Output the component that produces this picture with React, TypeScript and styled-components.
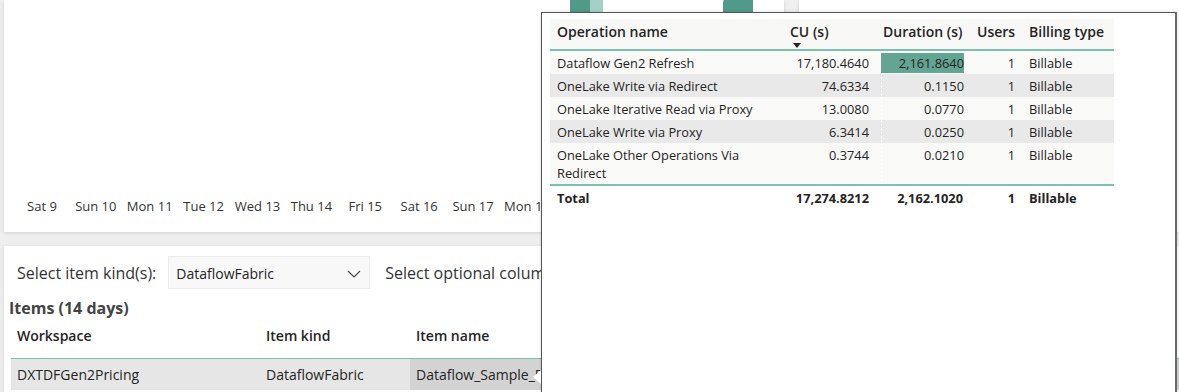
import React from "react";
import styled, { createGlobalStyle } from "styled-components";

const FONT = `"Segoe UI", "Open Sans", "Noto Sans", sans-serif`;

const Global = createGlobalStyle`
  html, body { margin: 0; padding: 0; }
  body {
    background: #efefef;
    font-family: ${FONT};
    color: #252423;
    width: 1179px;
    height: 392px;
    overflow: hidden;
  }
`;

const Page = styled.div`
  position: relative;
  width: 1179px;
  height: 392px;
  overflow: hidden;
  box-sizing: border-box;
  padding-left: 4px;
  display: flex;
  flex-direction: column;
  gap: 14px;
`;

const TopRow = styled.div`
  display: flex;
  gap: 15px;
  height: 232px;
  flex: none;
`;

const ChartCard = styled.div`
  width: 780px;
  flex: none;
  background: #fff;
  box-shadow: 0 1px 4px rgba(0, 0, 0, 0.13);
  display: flex;
  flex-direction: column;
`;

const SideCard = styled.div`
  flex: 1;
  background: #fff;
  box-shadow: 0 1px 4px rgba(0, 0, 0, 0.13);
`;

const Plot = styled.svg`
  display: block;
  flex: 1;
  width: 780px;
`;

const Axis = styled.div`
  display: flex;
  padding: 0 0 17px 11px;
`;

const Tick = styled.span`
  flex: none;
  width: 53.9px;
  text-align: center;
  white-space: nowrap;
  font-size: 13px;
  line-height: 18px;
  color: #333;
`;

const ListCard = styled.div`
  flex: 1;
  background: #fff;
  box-shadow: 0 1px 4px rgba(0, 0, 0, 0.13);
  padding-top: 10px;
  display: flex;
  flex-direction: column;
`;

const FilterRow = styled.div`
  display: flex;
  align-items: center;
  height: 33px;
  padding-left: 13px;
`;

const FilterLabel = styled.span`
  font-size: 16px;
  color: #333;
  white-space: nowrap;
`;

const Dropdown = styled.div`
  margin-left: 12px;
  width: 202px;
  height: 33px;
  box-sizing: border-box;
  background: #f8f8f8;
  border: 1px solid #ececec;
  display: flex;
  align-items: center;
  justify-content: space-between;
  padding: 2px 8px 0 7px;
  font-size: 14px;
  color: #252423;
`;

const SecondLabel = styled(FilterLabel)`
  margin-left: 15px;
`;

const Title = styled.div`
  margin-top: 8px;
  padding-left: 5px;
  font-size: 16px;
  line-height: 22px;
  font-weight: 700;
  color: #444;
`;

const Grid = styled.div`
  margin-left: 7px;
  display: grid;
  grid-template-columns: 249px 150px 1fr;
`;

const ListHead = styled.div`
  padding: 7px 6px 0;
  height: 40px;
  box-sizing: border-box;
  font-size: 14px;
  line-height: 20px;
  font-weight: 600;
  color: #252423;
  border-bottom: 1px solid #7fbfb0;
`;

const ListCell = styled.div<{ $shade?: boolean }>`
  padding: 0 6px;
  height: 31px;
  line-height: 31px;
  font-size: 14px;
  white-space: nowrap;
  color: #252423;
  background: ${(p) => (p.$shade ? "#d3d3d3" : "#e6e6e6")};
`;

const Popup = styled.div`
  position: absolute;
  left: 541px;
  top: 12px;
  width: 636px;
  height: 400px;
  box-sizing: border-box;
  background: #fff;
  border: 1px solid #555;
  border-right: 2px solid #6a6a6a;
  padding: 6px 0 0 8px;
  box-shadow: 0 0 3px rgba(0, 0, 0, 0.15);
`;

const Pointer = styled.div`
  position: absolute;
  left: -9px;
  top: 357px;
  width: 0;
  height: 0;
  border-top: 7.5px solid transparent;
  border-bottom: 7.5px solid transparent;
  border-right: 8px solid #fff;
`;

const Table = styled.div`
  width: 564px;
  display: grid;
  grid-template-columns: 233px 93px 94px 52px 92px;
  font-size: 12.8px;
  color: #252423;
`;

const Head = styled.div`
  background: #f8f8f7;
  height: 32px;
  box-sizing: border-box;
  padding: 4px 7px 0;
  font-size: 14px;
  line-height: 18px;
  font-weight: 600;
  white-space: nowrap;
  border-bottom: 2px solid #7fbfb0;
`;

const SortArrow = styled.div`
  width: 0;
  height: 0;
  margin: 2px 0 0 3px;
  border-left: 4px solid transparent;
  border-right: 4px solid transparent;
  border-top: 5px solid #252423;
`;

const Cell = styled.div<{ $bg: string; $right?: boolean; $bold?: boolean; $line?: boolean }>`
  background-color: ${(p) => p.$bg};
  padding: 3px 7px 2px;
  line-height: 18px;
  text-align: ${(p) => (p.$right ? "right" : "left")};
  font-weight: ${(p) => (p.$bold ? 700 : 400)};
  border-top: ${(p) => (p.$line ? "2px solid #7fbfb0" : "none")};
`;

const BarCell = styled(Cell)`
  padding: 3px 6px 2px 5px;
  background-image: linear-gradient(#64a493, #64a493),
    repeating-linear-gradient(to bottom, rgba(255, 255, 255, 0.95) 0 2px, transparent 2px 4px);
  background-repeat: no-repeat;
  background-origin: content-box;
  background-clip: padding-box;
  background-position: left -1px, left -3px;
  background-size: var(--bar) 20px, 1px 60px;
`;

const days = ["Sat 9", "Sun 10", "Mon 11", "Tue 12", "Wed 13", "Thu 14", "Fri 15", "Sat 16", "Sun 17", "Mon 18"];

type Row = { op: string[]; cu: string; dur: number; users: string; billing: string };
const rows: Row[] = [
  { op: ["Dataflow Gen2 Refresh"], cu: "17,180.4640", dur: 2161.864, users: "1", billing: "Billable" },
  { op: ["OneLake Write via Redirect"], cu: "74.6334", dur: 0.115, users: "1", billing: "Billable" },
  { op: ["OneLake Iterative Read via Proxy"], cu: "13.0080", dur: 0.077, users: "1", billing: "Billable" },
  { op: ["OneLake Write via Proxy"], cu: "6.3414", dur: 0.025, users: "1", billing: "Billable" },
  { op: ["OneLake Other Operations Via", "Redirect"], cu: "0.3744", dur: 0.021, users: "1", billing: "Billable" },
];
const maxDur = Math.max(...rows.map((r) => r.dur));
const fmt = (n: number) =>
  n.toLocaleString("en-US", { minimumFractionDigits: 4, maximumFractionDigits: 4 });

const ChevronDown = () => (
  <svg width="14" height="8" viewBox="0 0 14 8" fill="none">
    <path d="M1 1l6 6 6-6" stroke="#444" strokeWidth="1.1" />
  </svg>
);

export default function App() {
  return (
    <>
      <Global />
      <Page>
        <TopRow>
          <ChartCard>
            <Plot viewBox="0 0 780 197" preserveAspectRatio="none">
              <rect x="566" y="-10" width="20" height="60" fill="#4f9a88" />
              <rect x="586" y="-10" width="13" height="60" fill="#a3d1c6" />
              <path d="M719 50 V4 Q719 -4 727 -4 H749 V50 Z" fill="#4f9a88" />
            </Plot>
            <Axis>
              {days.map((d) => (
                <Tick key={d}>{d}</Tick>
              ))}
            </Axis>
          </ChartCard>
          <SideCard />
        </TopRow>
        <ListCard>
          <FilterRow>
            <FilterLabel>Select item kind(s):</FilterLabel>
            <Dropdown>
              <span>DataflowFabric</span>
              <ChevronDown />
            </Dropdown>
            <SecondLabel>Select optional columns</SecondLabel>
          </FilterRow>
          <Title>Items (14 days)</Title>
          <Grid>
            <ListHead>Workspace</ListHead>
            <ListHead>Item kind</ListHead>
            <ListHead>Item name</ListHead>
            <ListCell>DXTDFGen2Pricing</ListCell>
            <ListCell>DataflowFabric</ListCell>
            <ListCell $shade>Dataflow_Sample_Pricing</ListCell>
          </Grid>
        </ListCard>

        <Popup>
          <Pointer />
          <Table>
            <Head>Operation name</Head>
            <Head>
              CU (s)
              <SortArrow />
            </Head>
            <Head>Duration (s)</Head>
            <Head>Users</Head>
            <Head>Billing type</Head>
            {rows.map((r, i) => {
              const bg = i % 2 === 1 ? "#e9e9e9" : "#f9f9f8";
              return (
                <React.Fragment key={i}>
                  <Cell $bg={bg}>
                    {r.op.map((l, j) => (
                      <div key={j}>{l}</div>
                    ))}
                  </Cell>
                  <Cell $bg={bg} $right>
                    {r.cu}
                  </Cell>
                  <BarCell
                    $bg={bg}
                    $right
                    style={{ ["--bar" as any]: `${(r.dur / maxDur) * 100}%` }}
                  >
                    {fmt(r.dur)}
                  </BarCell>
                  <Cell $bg={bg} $right>
                    {r.users}
                  </Cell>
                  <Cell $bg={bg}>{r.billing}</Cell>
                </React.Fragment>
              );
            })}
            <Cell $bg="#fff" $bold $line>Total</Cell>
            <Cell $bg="#fff" $bold $line $right>17,274.8212</Cell>
            <Cell $bg="#fff" $bold $line $right>2,162.1020</Cell>
            <Cell $bg="#fff" $bold $line $right>1</Cell>
            <Cell $bg="#fff" $bold $line>Billable</Cell>
          </Table>
        </Popup>
      </Page>
    </>
  );
}
